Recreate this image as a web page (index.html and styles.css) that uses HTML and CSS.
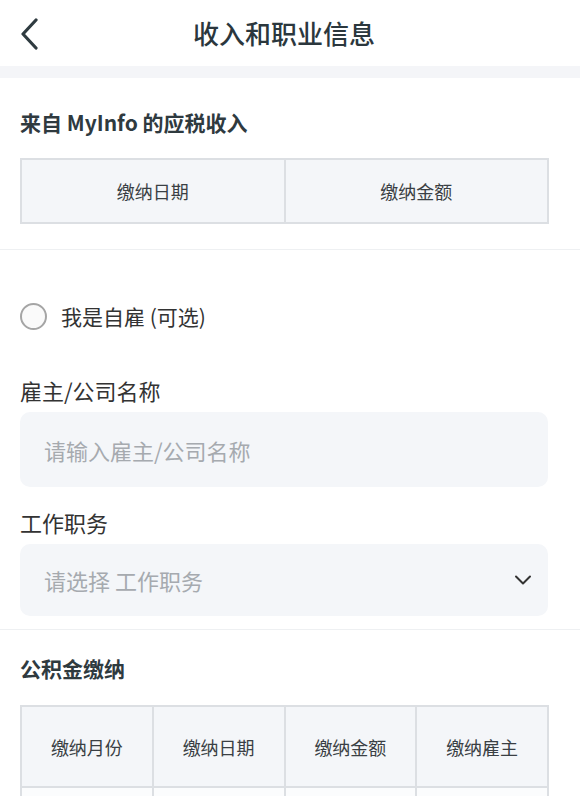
FILE: index.html
```html
<!DOCTYPE html>
<html lang="zh-CN">
  <head>
    <meta charset="UTF-8" />
    <meta name="viewport" content="width=device-width, initial-scale=1.0" />
    <title>收入和职业信息</title>
    <link rel="stylesheet" href="styles.css">
  </head>
  <body>
    <div class="header">
      <div class="back">
        <svg width="20" height="32" viewBox="0 0 20 32">
          <path d="M16 2 L3 16 L16 30" fill="none" stroke="#2f3b40" stroke-width="3.2" stroke-linecap="round" stroke-linejoin="round" />
        </svg>
      </div>
      <div class="title">收入和职业信息</div>
      <div></div>
    </div>
    <div class="band"></div>

    <div class="section section-income">
      <div class="heading">来自 MyInfo 的应税收入</div>
      <table class="data-table">
        <tr>
          <th>缴纳日期</th>
          <th>缴纳金额</th>
        </tr>
      </table>
    </div>

    <div class="section section-job">
      <div class="radio-row">
        <span class="radio"></span>
        <span>我是自雇 (可选)</span>
      </div>

      <div class="label label-first">雇主/公司名称</div>
      <div class="input">请输入雇主/公司名称</div>

      <div class="label">工作职务</div>
      <div class="input select">
        <span>请选择 工作职务</span>
        <svg width="18" height="12" viewBox="0 0 18 12">
          <path d="M2 2.5 L9 9.5 L16 2.5" fill="none" stroke="#333" stroke-width="2" stroke-linecap="round" stroke-linejoin="round" />
        </svg>
      </div>
    </div>

    <div class="section section-cpf">
      <div class="heading">公积金缴纳</div>
      <table class="data-table four">
        <tr>
          <th>缴纳月份</th>
          <th>缴纳日期</th>
          <th>缴纳金额</th>
          <th>缴纳雇主</th>
        </tr>
        <tr>
          <td></td>
          <td></td>
          <td></td>
          <td></td>
        </tr>
      </table>
    </div>
  </body>
</html>
```

FILE: styles.css
```css
body {
  margin: 0;
  background: #ffffff;
  font-family: "Noto Sans CJK SC", "Noto Sans", sans-serif;
  color: #333a3e;
  overflow: hidden;
}

.header {
  height: 66px;
  display: grid;
  grid-template-columns: 1fr auto 1fr;
  align-items: center;
}

.back {
  padding-left: 20px;
  padding-top: 2px;
  display: flex;
  align-items: center;
}

.title {
  font-size: 26px;
  font-weight: 500;
  color: #2b373d;
  line-height: 32px;
  margin-right: 12px;
}

.band {
  height: 12px;
  background-color: #f4f5f8;
}

.section {
  padding: 0 31px 0 20px;
}

.heading {
  font-size: 21px;
  font-weight: 700;
  line-height: 28px;
  color: #2f3a3f;
}

.section-income {
  padding-top: 30px;
  padding-bottom: 25px;
  border-bottom: 1px solid #eef0f2;
}

.section-income .heading {
  margin-bottom: 22px;
}

.data-table {
  width: 100%;
  border-collapse: collapse;
  table-layout: fixed;
}

.data-table th,
.data-table td {
  border: 2px solid #dcdfe3;
  background-color: #f4f6f9;
  font-size: 18px;
  font-weight: 400;
  color: #3a3f44;
  height: 62px;
  text-align: center;
  padding: 0;
}

.section-job {
  padding-top: 52px;
  padding-right: 32px;
  padding-bottom: 13px;
  border-bottom: 1px solid #eef0f2;
}

.radio-row {
  display: flex;
  align-items: center;
  gap: 14px;
  font-size: 21px;
  line-height: 28px;
  color: #333;
}

.radio {
  width: 23px;
  height: 23px;
  border: 2.5px solid #a5a5a5;
  border-radius: 50%;
  background-color: #fafafa;
}

.label {
  font-size: 22px;
  line-height: 28px;
  color: #333;
  margin-top: 21px;
  margin-bottom: 8px;
}

.label-first {
  margin-top: 46px;
}

.input {
  height: 75px;
  border-radius: 10px;
  background-color: #f4f6f9;
  display: flex;
  align-items: center;
  padding: 0 16px 0 24px;
  font-size: 22px;
  color: #a6aaaf;
}

.select {
  height: 72px;
  justify-content: space-between;
}

.section-cpf {
  padding-top: 24px;
}

.section-cpf .heading {
  margin-bottom: 23px;
}

.four th {
  height: 79px;
}

.four td {
  background-color: #fbfcfd;
  height: 60px;
}
```
